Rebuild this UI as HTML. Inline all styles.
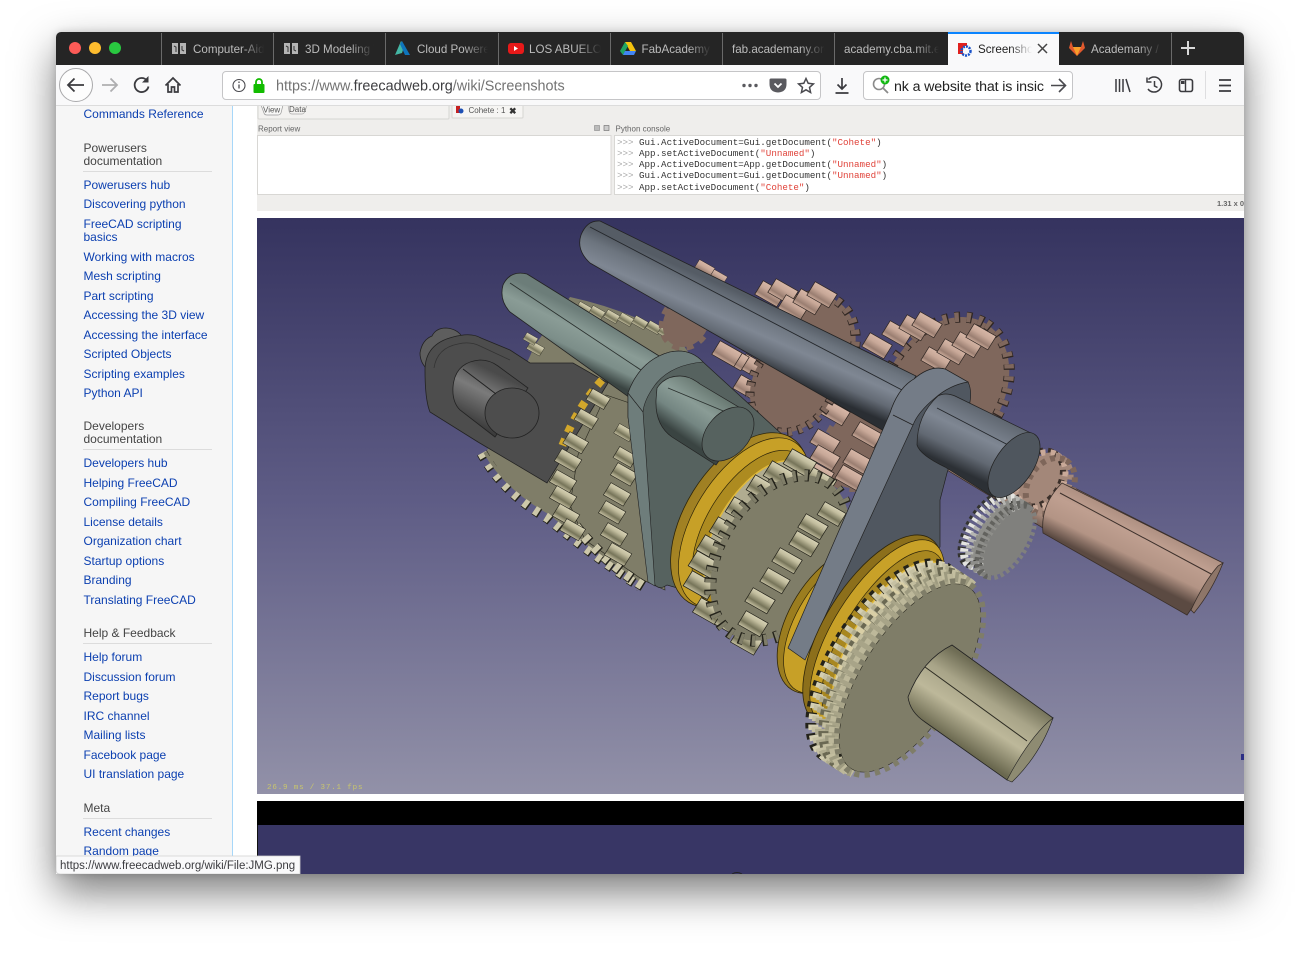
<!DOCTYPE html>
<html><head><meta charset="utf-8"><title>Screenshots</title>
<style>
html,body{margin:0;padding:0;background:#fff;width:1300px;height:954px;overflow:hidden}
#win{position:absolute;left:56px;top:32px;width:1188px;height:842px;border-radius:5px 5px 0 0;box-shadow:0 18px 42px rgba(0,0,0,.52),0 0 8px rgba(0,0,0,.15);overflow:hidden;background:#fff}
svg{position:absolute;left:0;top:0;display:block}
text{font-family:"Liberation Sans",sans-serif}
.l{font-size:12px;fill:#0b3fb0}
.h{font-size:12px;fill:#444}
.tb{font-size:11.6px;fill:#bcbcbc}
.m{font-family:"Liberation Mono",monospace;font-size:9.2px;fill:#333}
.p{font-family:"Liberation Mono",monospace;font-size:9.2px;fill:#aaa}
.r{fill:#e0433a}
.u{font-size:8px;fill:#666}
.ln{stroke:#222;stroke-width:.7}
</style></head><body>
<div id="win">
<svg width="1188" height="842" viewBox="56 32 1188 842" xmlns="http://www.w3.org/2000/svg">
<defs>
<linearGradient id="bg" x1="0" y1="218" x2="0" y2="794" gradientUnits="userSpaceOnUse"><stop offset="0" stop-color="#35335f"/><stop offset=".5" stop-color="#5f5d86"/><stop offset="1" stop-color="#9291a8"/></linearGradient>
<linearGradient id="sb" x1="800" y1="319" x2="776" y2="374" gradientUnits="userSpaceOnUse"><stop offset="0" stop-color="#555c65"/><stop offset=".2" stop-color="#6c747e"/><stop offset=".5" stop-color="#7f8793"/><stop offset=".75" stop-color="#636a74"/><stop offset="1" stop-color="#2a2e33"/></linearGradient>
<linearGradient id="sb2" x1="985" y1="405" x2="955" y2="468" gradientUnits="userSpaceOnUse"><stop offset="0" stop-color="#596069"/><stop offset=".45" stop-color="#7f8793"/><stop offset=".75" stop-color="#626973"/><stop offset="1" stop-color="#2c3035"/></linearGradient>
<linearGradient id="sm" x1="620" y1="330" x2="598" y2="376" gradientUnits="userSpaceOnUse"><stop offset="0" stop-color="#6c7d79"/><stop offset=".35" stop-color="#8a9c96"/><stop offset=".72" stop-color="#7c8e89"/><stop offset="1" stop-color="#3a4442"/></linearGradient>
<linearGradient id="sm2" x1="715" y1="390" x2="683" y2="437" gradientUnits="userSpaceOnUse"><stop offset="0" stop-color="#66766f"/><stop offset=".4" stop-color="#8a9c96"/><stop offset=".7" stop-color="#748682"/><stop offset="1" stop-color="#3a4442"/></linearGradient>
<linearGradient id="dk" x1="490" y1="370" x2="465" y2="420" gradientUnits="userSpaceOnUse"><stop offset="0" stop-color="#4a4a4a"/><stop offset=".4" stop-color="#7b7b7b"/><stop offset="1" stop-color="#3b3b3b"/></linearGradient>
<linearGradient id="pk" x1="1130" y1="498" x2="1100" y2="560" gradientUnits="userSpaceOnUse"><stop offset="0" stop-color="#9b7f72"/><stop offset=".45" stop-color="#bf9f90"/><stop offset=".75" stop-color="#b39485"/><stop offset="1" stop-color="#5b4a42"/></linearGradient>
<linearGradient id="kh" x1="1000" y1="680" x2="958" y2="745" gradientUnits="userSpaceOnUse"><stop offset="0" stop-color="#6f6d55"/><stop offset=".3" stop-color="#a8a488"/><stop offset=".6" stop-color="#bdb89a"/><stop offset="1" stop-color="#6a684f"/></linearGradient>
<linearGradient id="gd" x1="0" y1="-100" x2="0" y2="100" gradientUnits="userSpaceOnUse"><stop offset="0" stop-color="#8f7320"/><stop offset="1" stop-color="#d2a72b"/></linearGradient>
<linearGradient id="tg" x1="4.200" y1="-6.800" x2="-4.200" y2="6.800" gradientUnits="userSpaceOnUse"><stop offset="0" stop-color="#d8d3b6"/><stop offset=".3" stop-color="#c2bd9e"/><stop offset=".72" stop-color="#767459"/><stop offset="1" stop-color="#bdb89a"/></linearGradient>
<linearGradient id="tq" x1="4.200" y1="-6.800" x2="-4.200" y2="6.800" gradientUnits="userSpaceOnUse"><stop offset="0" stop-color="#d8b8a8"/><stop offset=".4" stop-color="#c8a898"/><stop offset=".8" stop-color="#9a7e71"/><stop offset="1" stop-color="#c4a494"/></linearGradient>
<g id="tk"><path d="M4.200-6.800L-17.800-19.300-26.200-5.700-4.200 6.800Z" fill="url(#tg)" stroke="#23221a" stroke-width=".7"/></g>
<g id="tp"><path d="M4.200-6.800L-17.800-19.300-26.200-5.700-4.200 6.800Z" fill="url(#tq)" stroke="#2f2622" stroke-width=".7"/></g>
<clipPath id="hf"><rect x="-300" y="-300" width="600" height="304"/></clipPath>
<clipPath id="img"><rect x="257" y="218" width="987" height="576"/></clipPath>
<clipPath id="urlc"><rect x="276" y="72" width="450" height="26"/></clipPath>
<clipPath id="sc"><rect x="894" y="72" width="150" height="26"/></clipPath>
<clipPath id="con"><rect x="615" y="136" width="629" height="58"/></clipPath>
<clipPath id="side"><rect x="56" y="105" width="176" height="769"/></clipPath>
<linearGradient id="fd" x1="0" x2="1" y1="0" y2="0"><stop offset="0" stop-color="#252525" stop-opacity="0"/><stop offset="1" stop-color="#252525"/></linearGradient>
<linearGradient id="fw" x1="0" x2="1" y1="0" y2="0"><stop offset="0" stop-color="#f9f9fa" stop-opacity="0"/><stop offset="1" stop-color="#f9f9fa"/></linearGradient>
</defs>

<!-- page -->
<rect x="56" y="105" width="1188" height="769" fill="#fff"/>
<rect x="56" y="105" width="176" height="769" fill="#f6f6f6"/>
<rect x="232" y="105" width="1" height="769" fill="#a7d7f9"/>

<!-- sidebar -->
<g clip-path="url(#side)">
<text class="l" x="83.500" y="118">Commands Reference</text>
<text class="h" x="83.500" y="152">Powerusers</text><text class="h" x="83.500" y="165">documentation</text>
<rect x="83" y="171" width="129" height="1" fill="#dcdcdc"/>
<text class="l" x="83.500" y="189">Powerusers hub</text>
<text class="l" x="83.500" y="208">Discovering python</text>
<text class="l" x="83.500" y="228">FreeCAD scripting</text>
<text class="l" x="83.500" y="241">basics</text>
<text class="l" x="83.500" y="261">Working with macros</text>
<text class="l" x="83.500" y="280">Mesh scripting</text>
<text class="l" x="83.500" y="300">Part scripting</text>
<text class="l" x="83.500" y="319">Accessing the 3D view</text>
<text class="l" x="83.500" y="339">Accessing the interface</text>
<text class="l" x="83.500" y="358">Scripted Objects</text>
<text class="l" x="83.500" y="378">Scripting examples</text>
<text class="l" x="83.500" y="397">Python API</text>
<text class="h" x="83.500" y="430">Developers</text><text class="h" x="83.500" y="443">documentation</text>
<rect x="83" y="449" width="129" height="1" fill="#dcdcdc"/>
<text class="l" x="83.500" y="467">Developers hub</text>
<text class="l" x="83.500" y="487">Helping FreeCAD</text>
<text class="l" x="83.500" y="506">Compiling FreeCAD</text>
<text class="l" x="83.500" y="526">License details</text>
<text class="l" x="83.500" y="545">Organization chart</text>
<text class="l" x="83.500" y="565">Startup options</text>
<text class="l" x="83.500" y="584">Branding</text>
<text class="l" x="83.500" y="604">Translating FreeCAD</text>
<text class="h" x="83.500" y="637">Help &amp; Feedback</text>
<rect x="83" y="643" width="129" height="1" fill="#dcdcdc"/>
<text class="l" x="83.500" y="661">Help forum</text>
<text class="l" x="83.500" y="681">Discussion forum</text>
<text class="l" x="83.500" y="700">Report bugs</text>
<text class="l" x="83.500" y="720">IRC channel</text>
<text class="l" x="83.500" y="739">Mailing lists</text>
<text class="l" x="83.500" y="759">Facebook page</text>
<text class="l" x="83.500" y="778">UI translation page</text>
<text class="h" x="83.500" y="812">Meta</text>
<rect x="83" y="818" width="129" height="1" fill="#dcdcdc"/>
<text class="l" x="83.500" y="836">Recent changes</text>
<text class="l" x="83.500" y="855">Random page</text>
</g>

<!-- FreeCAD UI strip -->
<rect x="257" y="105" width="987" height="106" fill="#efeeec"/>
<rect x="258" y="105" width="191" height="14" rx="1" fill="#f3f2f0" stroke="#d6d5d2"/>
<rect x="452" y="105" width="71" height="13" rx="1" fill="#f6f5f3" stroke="#d6d5d2"/>
<path d="M261 105l3 8q.5 2 3 2h11q2 0 3-2l2-8" fill="#f8f8f7" stroke="#999" stroke-width=".7"/>
<path d="M288 105l1 6q.5 3 3 3h10q2 0 3-3l2-6" fill="none" stroke="#aaa" stroke-width=".7"/>
<text x="263" y="112.500" style="font-size:8px;fill:#555">View</text>
<text x="289" y="112" style="font-size:8px;fill:#555">Data</text>
<rect x="456" y="106" width="4" height="7" fill="#c62020"/><circle cx="461" cy="111" r="2.500" fill="#1d4fb4"/>
<text x="468.500" y="113" style="font-size:8px;fill:#555">Cohete : 1</text>
<text x="509" y="114" style="font-size:9px;fill:#333;font-weight:bold">✖</text>
<text class="u" x="258" y="131.500">Report view</text>
<text class="u" x="615.500" y="131.500">Python console</text>
<rect x="594.500" y="125.500" width="5" height="5" fill="#bbb" stroke="#888" stroke-width=".6"/>
<rect x="604" y="125.500" width="5" height="5" fill="#ccc" stroke="#666" stroke-width=".6"/>
<rect x="257.500" y="135.500" width="353.500" height="59" fill="#fff" stroke="#d8d7d4"/>
<rect x="614.500" y="135.500" width="630" height="59" fill="#fff" stroke="#d8d7d4"/>
<g clip-path="url(#con)">
<text class="p" x="617" y="145">&gt;&gt;&gt;</text><text class="m" x="639" y="145">Gui.ActiveDocument=Gui.getDocument(<tspan class="r">"Cohete"</tspan>)</text>
<text class="p" x="617" y="156">&gt;&gt;&gt;</text><text class="m" x="639" y="156">App.setActiveDocument(<tspan class="r">"Unnamed"</tspan>)</text>
<text class="p" x="617" y="167">&gt;&gt;&gt;</text><text class="m" x="639" y="167">App.ActiveDocument=App.getDocument(<tspan class="r">"Unnamed"</tspan>)</text>
<text class="p" x="617" y="178">&gt;&gt;&gt;</text><text class="m" x="639" y="178">Gui.ActiveDocument=Gui.getDocument(<tspan class="r">"Unnamed"</tspan>)</text>
<text class="p" x="617" y="190">&gt;&gt;&gt;</text><text class="m" x="639" y="190">App.setActiveDocument(<tspan class="r">"Cohete"</tspan>)</text>
</g>
<text x="1217" y="206" style="font-size:7.500px;fill:#666;font-weight:bold">1.31 x 0</text>

<!-- 3D view -->
<g clip-path="url(#img)">
<rect x="257" y="218" width="987" height="576" fill="url(#bg)"/>

<!-- pink shaft -->
<path d="M930 415L1223 563L1187 615L947 470Z" fill="url(#pk)" stroke="#3a2f2a" stroke-width=".8"/>

<!-- pink big gear -->
<g transform="translate(945 390) rotate(-58)">
<ellipse rx="78" ry="58" fill="#7f675c"/>
<ellipse rx="78" ry="58" fill="none" stroke="#2f2622" stroke-width="11" pathLength="100" stroke-dasharray="1.300 1.500"/>
<ellipse rx="78" ry="58" fill="none" stroke="#7f675c" stroke-width="9.500" pathLength="100" stroke-dasharray="1 1.800"/>
</g>
<use href="#tp" transform="translate(888 352)"/><use href="#tp" transform="translate(908 340)"/><use href="#tp" transform="translate(925 334)"/><use href="#tp" transform="translate(938 331)"/><use href="#tp" transform="translate(947 366)"/><use href="#tp" transform="translate(963 358)"/><use href="#tp" transform="translate(978 351)"/><use href="#tp" transform="translate(992 343)"/>
<!-- pink top gear -->
<g transform="translate(806 350) rotate(-58)">
<ellipse rx="58" ry="46" fill="#7f675c"/>
<ellipse rx="58" ry="46" fill="none" stroke="#2f2622" stroke-width="10" pathLength="100" stroke-dasharray="1.800 1.800"/>
<ellipse rx="58" ry="46" fill="none" stroke="#7f675c" stroke-width="8.500" pathLength="100" stroke-dasharray="1.400 2.200"/>
</g>
<use href="#tp" transform="translate(781 300)"/><use href="#tp" transform="translate(794 298)"/><use href="#tp" transform="translate(804 314)"/><use href="#tp" transform="translate(819 308)"/><use href="#tp" transform="translate(833 301)"/>
<use href="#tp" transform="translate(712 273) scale(.7)"/><use href="#tp" transform="translate(725 281) scale(.6)"/>
<!-- pink gear D -->
<g transform="translate(862 445) rotate(-58)">
<ellipse rx="46" ry="34" fill="#7f675c"/>
<ellipse rx="46" ry="34" fill="none" stroke="#7f675c" stroke-width="8" pathLength="100" stroke-dasharray="3 3"/>
</g>
<use href="#tp" transform="translate(846 419)"/><use href="#tp" transform="translate(836 448)"/><use href="#tp" transform="translate(836 464)"/><use href="#tp" transform="translate(830 480)"/><use href="#tp" transform="translate(878 441)"/><use href="#tp" transform="translate(869 468)"/><use href="#tp" transform="translate(861 484)"/>
<!-- pink gear C -->
<use href="#tp" transform="translate(764 373)"/><use href="#tp" transform="translate(759 394)"/><use href="#tp" transform="translate(745 364)"/><use href="#tp" transform="translate(738 360)"/>
<g transform="translate(793 385) rotate(-58)">
<ellipse rx="50" ry="40" fill="#7f675c"/>
<ellipse rx="50" ry="40" fill="none" stroke="#2f2622" stroke-width="9" pathLength="100" stroke-dasharray="1.700 2"/>
<ellipse rx="50" ry="40" fill="none" stroke="#7f675c" stroke-width="7.500" pathLength="100" stroke-dasharray="1.300 2.400"/>
</g>

<!-- small gear on pink shaft -->
<g transform="translate(1052 487) rotate(-58)">
<ellipse cy="-10" rx="30" ry="22" fill="#a38779"/>
<ellipse cy="-16" rx="30" ry="22" fill="none" stroke="#3a2f2a" stroke-width="6" pathLength="100" stroke-dasharray="3 3"/>
<ellipse cy="-13" rx="30" ry="22" fill="none" stroke="#c9a998" stroke-width="6" pathLength="100" stroke-dasharray="3 3"/>
<ellipse cy="-7" rx="30" ry="22" fill="none" stroke="#a38779" stroke-width="6" pathLength="100" stroke-dasharray="3 3"/>
<ellipse cy="-2" rx="30" ry="22" fill="none" stroke="#7e665a" stroke-width="6" pathLength="100" stroke-dasharray="3 3"/>
</g>
<path d="M1062 483L1223 563L1187 615L1043 533Q1040 505 1062 483Z" fill="url(#pk)" stroke="#3a2f2a" stroke-width=".8"/>
<path d="M1060 493L1213 575" stroke="#3c302b" stroke-width="1"/>
<path d="M1218 566q-14 16-27 44l3 3q18-22 29-50z" fill="#8e7669" stroke="#3a2f2a" stroke-width=".8"/>

<!-- back khaki disk -->
<path d="M485 455Q505 490 550 515Q590 550 640 582L720 400L680 340Q630 310 570 297L535 345Z" fill="#7f7d68"/>
<path d="M482 453Q503 492 548 518Q590 553 640 586" fill="none" stroke="#23221a" stroke-width="11" stroke-dasharray="6.500 6.500"/>
<path d="M482 453Q503 492 548 518Q590 553 640 586" fill="none" stroke="#cdc8aa" stroke-width="9.500" stroke-dasharray="5 8"/>
<path d="M485 452Q505 487 550 512Q590 547 640 579" fill="none" stroke="#7f7d68" stroke-width="3.500"/>
<use href="#tk" transform="translate(590 312) scale(.55)"/><use href="#tk" transform="translate(603 316) scale(.55)"/><use href="#tk" transform="translate(618 320) scale(.55)"/><use href="#tk" transform="translate(632 323) scale(.55)"/><use href="#tk" transform="translate(646 326) scale(.55)"/><use href="#tk" transform="translate(660 331) scale(.55)"/><use href="#tk" transform="translate(672 336) scale(.55)"/>
<use href="#tk" transform="translate(542 352) scale(.6)"/><use href="#tk" transform="translate(536 342) scale(.5)"/>
<!-- pink under-shaft gear -->
<g transform="translate(686 322) rotate(-58)">
<ellipse rx="26" ry="22" fill="#7f675c"/>
<ellipse rx="26" ry="22" fill="none" stroke="#7f675c" stroke-width="8" pathLength="100" stroke-dasharray="4.500 4.500"/>
</g>

<!-- dark bracket -->
<path d="M432 336q-10 4-12 17 0 10 8 17l30-15 6-14q-4-12-18-13-10 0-14 8z" fill="#5e5e5e" stroke="#222" stroke-width=".8"/>
<path d="M425 370q0-26 28-33 18-5 28 1l29 12 20 13h43l35 20-61 100-69-41-48-30q-5-12-5-42z" fill="#4d4d4d" stroke="#222" stroke-width=".8"/>
<path d="M434 368q3-20 24-24 12-3 22 2l30 14" fill="none" stroke="#333" stroke-width=".8"/>
<path d="M453 387q2-25 27-27 10 0 18 6l30 22-33 49-35-27q-8-8-7-23z" fill="url(#dk)" stroke="#222" stroke-width=".8"/>
<ellipse cx="512" cy="413" rx="27" ry="25" fill="#4d4d4d" stroke="#222" stroke-width=".8"/>
<path d="M463 369L496 394" stroke="#222"/>

<!-- gold behind left gear, chunk gear -->
<path d="M602 380Q575 410 560 452" fill="none" stroke="#d2a72b" stroke-width="8" stroke-dasharray="7 7"/>
<path d="M606 395L578 455L570 505L585 540L643 580L665 590L650 410Z" fill="#7f7d68" stroke="#2a291f" stroke-width=".6"/>
<path d="M567 515Q600 560 645 587" fill="none" stroke="#23221a" stroke-width="11" stroke-dasharray="7 7"/>
<path d="M567 515Q600 560 645 587" fill="none" stroke="#cdc8aa" stroke-width="9.500" stroke-dasharray="5.500 8.500"/>
<use href="#tk" transform="translate(607 404) scale(.8)"/><use href="#tk" transform="translate(595 424) scale(.8)"/><use href="#tk" transform="translate(585 448) scale(.85)"/><use href="#tk" transform="translate(578 466) scale(.9)"/><use href="#tk" transform="translate(573 487) scale(.9)"/><use href="#tk" transform="translate(573 503) scale(.9)"/><use href="#tk" transform="translate(576 521) scale(.9)"/><use href="#tk" transform="translate(582 535) scale(.85)"/>
<use href="#tk" transform="translate(632 437) scale(.7)"/><use href="#tk" transform="translate(634 462) scale(.8)"/><use href="#tk" transform="translate(634 480) scale(.9)"/><use href="#tk" transform="translate(627 500) scale(.9)"/><use href="#tk" transform="translate(622 518) scale(.9)"/><use href="#tk" transform="translate(624 540) scale(.9)"/><use href="#tk" transform="translate(628 560) scale(.9)"/>

<!-- middle shaft -->
<path d="M527 274L743 408L707 453L510 312Q499 300 503 285Q510 270 527 274Z" fill="url(#sm)" stroke="#222" stroke-width=".8"/>
<path d="M510 283L668 388" stroke="#2a302e" stroke-width=".9"/>

<!-- fork 1 -->
<path d="M628 393Q640 360 670 352Q690 348 703 362L797 448L720 600L667 585Q657 592 652 580L628 417Z" fill="#56625f" stroke="#222" stroke-width=".7"/>
<path d="M628 393Q640 360 670 352Q690 348 703 362Q670 365 655 385Q644 400 643 412L655 586L648 582L628 417Z" fill="#6e7d7b" stroke="#222" stroke-width=".6"/>
<path d="M643 412L628 393" stroke="#222" stroke-width=".7" fill="none"/>

<!-- ring 1 -->
<g transform="translate(740 520) rotate(-58)">
<ellipse rx="97" ry="55" fill="url(#gd)" stroke="#2e2509" stroke-width=".8"/>
<ellipse cy="5" rx="95" ry="50" fill="#c7a027" stroke="#2e2509" stroke-width=".7"/>
<ellipse cy="13" rx="86" ry="44" fill="#ad8b20" stroke="#2e2509" stroke-width=".7"/>
<ellipse cy="19" rx="78" ry="38" fill="#b0ac90" stroke="#e0b93a" stroke-width="1.500"/>
</g>

<!-- fork 1 cylinder on top of ring -->
<path d="M657 388Q665 376 680 376Q690 376 700 384L752 415L716 465L672 437Q655 425 656 400Z" fill="url(#sm2)" stroke="#222" stroke-width=".7"/>
<path d="M668 388L745 420" stroke="#2a302e" stroke-width=".9"/>
<ellipse cx="728" cy="434" rx="31" ry="21" transform="rotate(-48 728 434)" fill="#56625f" stroke="#222" stroke-width=".7"/>

<!-- central gear -->
<use href="#tk" transform="translate(832 488) scale(1.100)"/><use href="#tk" transform="translate(812 470) scale(1.100)"/><use href="#tk" transform="translate(792 482) scale(1.100)"/><use href="#tk" transform="translate(775 496) scale(1.100)"/><use href="#tk" transform="translate(754 518) scale(1.100)"/><use href="#tk" transform="translate(738 538) scale(1.100)"/><use href="#tk" transform="translate(725 556) scale(1.100)"/><use href="#tk" transform="translate(717 572) scale(1.100)"/><use href="#tk" transform="translate(712 592) scale(1.100)"/><use href="#tk" transform="translate(720 618) scale(1.050)"/><use href="#tk" transform="translate(742 630) scale(1.050)"/><use href="#tk" transform="translate(758 648) scale(1.050)"/>
<g transform="translate(780 558) rotate(-58)">
<ellipse rx="90" ry="60" fill="#7f7d68"/>
<ellipse rx="90" ry="60" fill="none" stroke="#23221a" stroke-width="12" pathLength="100" stroke-dasharray="1 1.500"/>
<ellipse rx="90" ry="60" fill="none" stroke="#7f7d68" stroke-width="10.500" pathLength="100" stroke-dasharray=".7 1.800"/>
</g>
<use href="#tk" transform="translate(842 520) scale(.95)"/><use href="#tk" transform="translate(824 533)"/><use href="#tk" transform="translate(815 550)"/><use href="#tk" transform="translate(798 567)"/><use href="#tk" transform="translate(786 587)"/><use href="#tk" transform="translate(771 607)"/><use href="#tk" transform="translate(764 630)"/>

<!-- rear gold ring 2a -->
<g transform="translate(835 620) rotate(-58)">
<ellipse rx="82" ry="45" fill="#9b7d1f" stroke="#2e2509" stroke-width=".8"/>
<ellipse cy="4" rx="80" ry="41" fill="#c7a027" stroke="#2e2509" stroke-width=".7"/>
</g>

<!-- grey small gear -->
<g transform="translate(1008 542) rotate(-58)">
<ellipse cy="-12" rx="40" ry="18" fill="#8e8e8a"/>
<g clip-path="url(#hf)">
<ellipse cy="-24" rx="40" ry="18" fill="none" stroke="#33332f" stroke-width="8" pathLength="100" stroke-dasharray="1.800 1.600"/>
<ellipse cy="-21" rx="40" ry="18" fill="none" stroke="#e4e4e0" stroke-width="8" pathLength="100" stroke-dasharray="1.800 1.600"/>
<ellipse cy="-15" rx="40" ry="18" fill="none" stroke="#b5b5b1" stroke-width="8" pathLength="100" stroke-dasharray="1.800 1.600"/>
<ellipse cy="-9" rx="40" ry="18" fill="none" stroke="#8e8e8a" stroke-width="8" pathLength="100" stroke-dasharray="1.800 1.600"/>
<ellipse cy="-4" rx="40" ry="18" fill="none" stroke="#62625e" stroke-width="8" pathLength="100" stroke-dasharray="1.800 1.600"/>
</g>
<ellipse rx="38" ry="17" fill="#80807d"/>
<ellipse rx="40" ry="18" fill="none" stroke="#80807d" stroke-width="6" pathLength="100" stroke-dasharray="1.800 1.600"/>
</g>

<!-- back shaft -->
<path d="M600 221L916 376L884 431L590 263Q576 250 581 235Q587 220 600 221Z" fill="url(#sb)" stroke="#222" stroke-width=".8"/>
<path d="M590 227L902 390" stroke="#23262a" stroke-width=".9"/>

<!-- fork 2 -->
<path d="M890 413Q898 388 914 379Q930 365 945 369L968 382Q972 390 970 402L947 473L940 500L940 547L825 625L795 640Z" fill="#505760" stroke="#222" stroke-width=".7"/>
<path d="M890 413Q898 388 914 379Q930 365 945 369L968 382Q950 385 935 398Q918 412 913 425L805 660L788 648Z" fill="#747c87" stroke="#222" stroke-width=".7"/>
<path d="M893 415L913 425" stroke="#222" stroke-width=".8"/>
<path d="M938 396Q945 392 955 396L1035 435L993 497L945 467Q920 455 917 445Q917 415 938 396Z" fill="url(#sb2)" stroke="#222" stroke-width=".7"/>
<path d="M937 408L1012 447" stroke="#23262a" stroke-width=".9"/>
<ellipse cx="1014" cy="465" rx="37" ry="19" transform="rotate(-56 1014 465)" fill="#4f565e" stroke="#222" stroke-width=".7"/>

<!-- ring 2 -->
<g transform="translate(873 630) rotate(-58)">
<ellipse rx="108" ry="48" fill="#8c6f1b" stroke="#2e2509" stroke-width=".8"/>
<ellipse cy="5" rx="106" ry="44" fill="#c8a128" stroke="#2e2509" stroke-width=".7"/>
<ellipse cy="12" rx="98" ry="39" fill="#a88720" stroke="#2e2509" stroke-width=".7"/>
<ellipse cy="18" rx="90" ry="34" fill="#d9cfa6" stroke="#e0b93a" stroke-width="1.500"/>
</g>

<!-- front gear -->
<g transform="translate(910 678) rotate(-57)">
<g clip-path="url(#hf)">
<ellipse cy="-14" rx="112" ry="50" fill="#a8a488"/>
<ellipse cy="-30" rx="112" ry="50" fill="none" stroke="#23221a" stroke-width="11" pathLength="100" stroke-dasharray="1 1"/>
<ellipse cy="-27" rx="112" ry="50" fill="none" stroke="#d4cfb2" stroke-width="10" pathLength="100" stroke-dasharray="1 1"/>
<ellipse cy="-23" rx="112" ry="50" fill="none" stroke="#c6c1a3" stroke-width="10" pathLength="100" stroke-dasharray="1 1"/>
<ellipse cy="-19" rx="112" ry="50" fill="none" stroke="#b0ac8f" stroke-width="10" pathLength="100" stroke-dasharray="1 1"/>
<ellipse cy="-15" rx="112" ry="50" fill="none" stroke="#6a6852" stroke-width="10" pathLength="100" stroke-dasharray="1 1"/>
<ellipse cy="-11" rx="112" ry="50" fill="none" stroke="#c3be9f" stroke-width="10" pathLength="100" stroke-dasharray="1 1"/>
<ellipse cy="-7" rx="112" ry="50" fill="none" stroke="#9e9b80" stroke-width="10" pathLength="100" stroke-dasharray="1 1"/>
<ellipse cy="-3" rx="112" ry="50" fill="none" stroke="#bdb89a" stroke-width="10" pathLength="100" stroke-dasharray="1 1"/>
</g>
<ellipse rx="108" ry="47" fill="#7f7d68" stroke="#2c2b22" stroke-width=".6"/>
<ellipse rx="111" ry="49" fill="none" stroke="#7f7d68" stroke-width="6" pathLength="100" stroke-dasharray="1 1"/>
</g>

<!-- front shaft -->
<path d="M908 697Q922 660 952 645L1053 718L1007 780L925 722Q910 712 908 697Z" fill="url(#kh)" stroke="#222" stroke-width=".8"/>
<path d="M925 667L1027 741" stroke="#2c2b22" stroke-width="1"/>
<path d="M1053 718Q1030 736 1007 780L1012 782Q1040 755 1053 718Z" fill="#8e8b72" stroke="#222" stroke-width=".6"/>

<text x="267" y="789" style="font-family:'Liberation Mono',monospace;font-size:7.500px;letter-spacing:.85px;fill:#c9c66c">26.9 ms / 37.1 fps</text>
<rect x="1241" y="754" width="3" height="6" fill="#2d2f85"/>
</g>

<!-- second image -->
<rect x="257" y="801" width="987" height="24" fill="#000"/>
<rect x="257" y="825" width="987" height="49" fill="#383665"/>
<rect x="257" y="825" width="1" height="49" fill="#111"/>
<path d="M732 874q5-3 10 0" stroke="#222" fill="none"/>

<!-- status tooltip -->
<path d="M56 856H300V874H60q-4 0-4-4Z" fill="#f9f9fa" stroke="#cfcfcf" stroke-width=".8"/>
<text x="60" y="869" style="font-size:11.500px;fill:#3b3b3f">https://www.freecadweb.org/wiki/File:JMG.png</text>

<!-- tab bar -->
<rect x="56" y="32" width="1188" height="33" fill="#252525"/>
<circle cx="75" cy="48" r="6" fill="#fc5b57"/><circle cx="95" cy="48" r="6" fill="#fdbc2e"/><circle cx="115" cy="48" r="6" fill="#29c840"/>
<g fill="#6a6a6a">
<rect x="161" y="33" width="1" height="32"/><rect x="273" y="33" width="1" height="32"/><rect x="385" y="33" width="1" height="32"/><rect x="498" y="33" width="1" height="32"/><rect x="610" y="33" width="1" height="32"/><rect x="722" y="33" width="1" height="32"/><rect x="834" y="33" width="1" height="32"/><rect x="1171" y="33" width="1" height="32"/>
</g>
<rect x="948" y="34" width="111" height="31" fill="#f9f9fa"/>
<rect x="948" y="32" width="111" height="2" fill="#0a84ff"/>

<!-- favicons -->
<g>
<path d="M172 43h6v11h-6zM180 43h6v11h-6z" fill="#b4b4b4"/><path d="M174 46l2 1v5M182 46v4l2 1" stroke="#333" fill="none"/>
<path d="M284 43h6v11h-6zM292 43h6v11h-6z" fill="#b4b4b4"/><path d="M286 46l2 1v5M294 46v4l2 1" stroke="#333" fill="none"/>
<path d="M401 41L395 55L402 53L404 47Z" fill="#44b7a5"/><path d="M402 41L410 55L405 55L400 44Z" fill="#0f75bc"/>
<rect x="508" y="43" width="16" height="11" rx="3" fill="#e81919"/><path d="M514 46l4 2.500-4 2.500z" fill="#fff"/>
<path d="M625 42H631L636 51H630Z" fill="#f4c20d"/><path d="M625 42L620 51L623 55L628 46Z" fill="#1fa463"/><path d="M623 55H634L636 51H625Z" fill="#4285f4"/>
<rect x="958" y="43" width="5" height="11" fill="#e0201e"/><rect x="963" y="43" width="4" height="3" fill="#e0201e"/>
<circle cx="966" cy="51" r="4.500" fill="none" stroke="#1a53c9" stroke-width="2.500" stroke-dasharray="2 1"/>
<path d="M1069 48L1071 41L1073 47H1081L1083 41L1085 48L1077 56Z" fill="#e2592d"/><path d="M1073 47H1081L1077 56Z" fill="#f9a02a"/>
</g>
<text class="tb" x="193" y="53">Computer-Aid</text><rect x="242" y="40" width="22" height="18" fill="url(#fd)"/><rect x="264" y="40" width="9" height="18" fill="#252525"/>
<text class="tb" x="305" y="53">3D Modeling T</text><rect x="350" y="40" width="24" height="18" fill="url(#fd)"/><rect x="374" y="40" width="11" height="18" fill="#252525"/>
<text class="tb" x="417" y="53">Cloud Powered</text><rect x="464" y="40" width="24" height="18" fill="url(#fd)"/><rect x="488" y="40" width="10" height="18" fill="#252525"/>
<text class="tb" x="529" y="53">LOS ABUELOS</text><rect x="577" y="40" width="24" height="18" fill="url(#fd)"/><rect x="601" y="40" width="9" height="18" fill="#252525"/>
<text class="tb" x="641.500" y="53">FabAcademy I</text><rect x="689" y="40" width="22" height="18" fill="url(#fd)"/><rect x="711" y="40" width="11" height="18" fill="#252525"/>
<text class="tb" x="732" y="53">fab.academany.org</text><rect x="801" y="40" width="24" height="18" fill="url(#fd)"/><rect x="825" y="40" width="9" height="18" fill="#252525"/>
<text class="tb" x="844" y="53">academy.cba.mit.e</text><rect x="915" y="40" width="24" height="18" fill="url(#fd)"/><rect x="939" y="40" width="9" height="18" fill="#252525"/>
<text x="978" y="53" style="font-size:11.600px;fill:#222">Screenshots</text><rect x="1010" y="40" width="22" height="18" fill="url(#fw)"/><rect x="1032" y="40" width="26" height="18" fill="#f9f9fa"/>
<path d="M1038 44l9 9M1047 44l-9 9" stroke="#444" stroke-width="1.500" fill="none"/>
<text class="tb" x="1091" y="53">Academany / F</text><rect x="1138" y="40" width="24" height="18" fill="url(#fd)"/><rect x="1162" y="40" width="9" height="18" fill="#252525"/>
<path d="M1188 41v14M1181 48h14" stroke="#d8d8d8" stroke-width="2" fill="none"/>

<!-- toolbar -->
<rect x="56" y="65" width="1188" height="40" fill="#f9f9fa"/>
<rect x="56" y="105" width="1188" height="1" fill="#dcdcdc"/>
<circle cx="76" cy="85" r="16.500" fill="#fdfdfd" stroke="#a9a9ab"/>
<path d="M84 85H68M74.500 78.500L68 85l6.500 6.500" fill="none" stroke="#3b3b3f" stroke-width="1.800"/>
<path d="M117 85H102M110.500 78.500L117 85l-6.500 6.500" fill="none" stroke="#aeaeb0" stroke-width="1.800"/>
<path d="M147 80.500a7 7 0 1 0 1.500 6" fill="none" stroke="#3b3b3f" stroke-width="1.800"/><path d="M148.500 76v6.500H142z" fill="#3b3b3f"/>
<path d="M165.500 85.500L173 78l7.500 7.500M168 84v8h3.500v-5h3v5h3.500v-8" fill="none" stroke="#3b3b3f" stroke-width="1.700"/>
<rect x="222.500" y="71.500" width="598" height="28" rx="3.500" fill="#fff" stroke="#c5c5c7"/>
<circle cx="239" cy="85.500" r="6" fill="none" stroke="#4a4a4f" stroke-width="1.100"/><path d="M239 84.500v4M239 81.500v1.500" stroke="#4a4a4f" stroke-width="1.300"/>
<rect x="253.500" y="84" width="11" height="9" rx="1" fill="#12bc00"/><path d="M256 84.500v-2.500a3 3 0 0 1 6 0v2.500" fill="none" stroke="#12bc00" stroke-width="1.800"/>
<text x="276" y="90.500" clip-path="url(#urlc)" style="font-size:14.400px;fill:#737373">https://www.<tspan fill="#3d3d40">freecadweb.org</tspan>/wiki/Screenshots</text>
<circle cx="744" cy="85.500" r="1.700" fill="#5a5a5f"/><circle cx="750" cy="85.500" r="1.700" fill="#5a5a5f"/><circle cx="756" cy="85.500" r="1.700" fill="#5a5a5f"/>
<path d="M771 78.500h14q1.500 0 1.500 1.500v4q0 8-8.500 8.500-8.500-.5-8.500-8.500v-4q0-1.500 1.500-1.500z" fill="#5a5a5f"/><path d="M774.500 83.500l3.500 3.500 3.500-3.500" fill="none" stroke="#fff" stroke-width="1.800"/>
<path d="M806 78.500l2.200 4.800 5.200.6-3.900 3.500 1.100 5.100-4.600-2.700-4.600 2.700 1.100-5.100-3.900-3.500 5.200-.6z" fill="none" stroke="#4a4a4f" stroke-width="1.500"/>
<path d="M842 78v11M837.500 84.500l4.500 4.500 4.500-4.500M835.500 93h13" fill="none" stroke="#3b3b3f" stroke-width="1.700"/>
<rect x="863.500" y="71.500" width="209" height="28" rx="3.500" fill="#fff" stroke="#c5c5c7"/>
<circle cx="879" cy="84" r="5.500" fill="none" stroke="#8a8a8a" stroke-width="1.600"/><path d="M883 88l5 5" stroke="#8a8a8a" stroke-width="1.800"/>
<circle cx="885" cy="80" r="4.500" fill="#12b812"/><path d="M885 77.500v5M882.500 80h5" stroke="#fff" stroke-width="1.300"/>
<text x="894" y="91" clip-path="url(#sc)" style="font-size:14.200px;fill:#222" textLength="150" lengthAdjust="spacing">nk a website that is insic</text>
<path d="M1051 85.500h14M1059 79l6.500 6.500-6.500 6.500" fill="none" stroke="#4a4a4f" stroke-width="1.600"/>
<path d="M1116 79v13M1119.500 79v13M1123 79v13M1126 79l4 13" fill="none" stroke="#3b3b3f" stroke-width="1.500"/>
<path d="M1148.500 79.500a7.500 7.500 0 1 1-.5 9.500M1147 77.500v4.500h4.500M1154.500 81v5l3 1.500" fill="none" stroke="#3b3b3f" stroke-width="1.500"/>
<rect x="1179.500" y="79.500" width="13" height="12" rx="2" fill="none" stroke="#3b3b3f" stroke-width="1.600"/><path d="M1185.500 80v11" stroke="#3b3b3f" stroke-width="1.400"/><rect x="1181" y="81" width="3.500" height="3" fill="#3b3b3f"/>
<rect x="1205" y="71" width="1" height="28" fill="#dedee0"/>
<path d="M1219 80h12M1219 85.500h12M1219 91h12" stroke="#3b3b3f" stroke-width="1.700"/>
</svg>
</div>
</body></html>
